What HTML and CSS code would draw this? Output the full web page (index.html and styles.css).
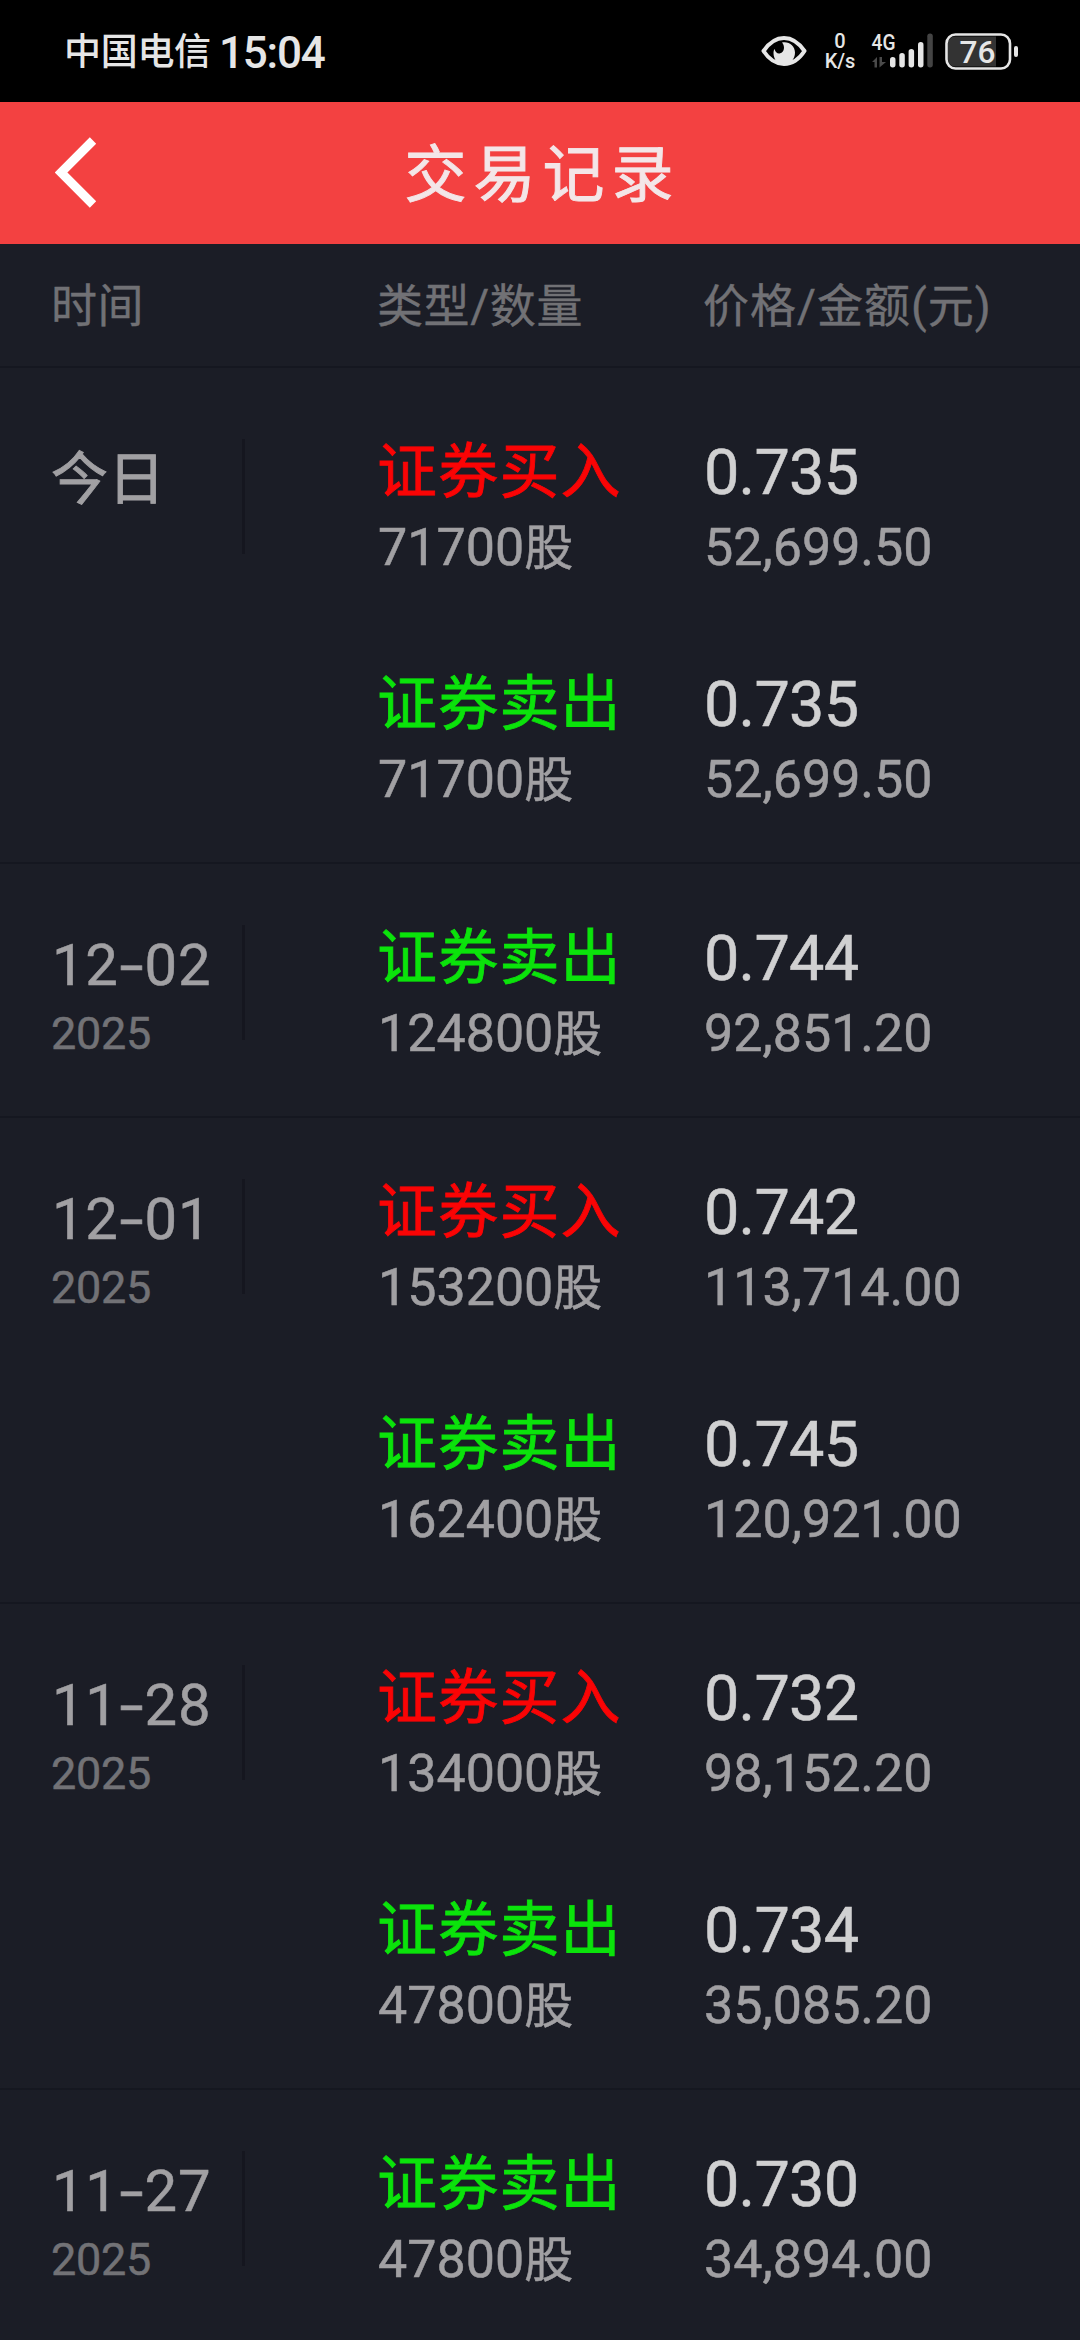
FILE: index.html
```html
<!DOCTYPE html>
<html lang="zh-CN">
<head>
<meta charset="utf-8">
<title>交易记录</title>
<link rel="stylesheet" href="styles.css">
</head>
<body>
<div class="status">
  <span class="carrier">中国电信</span>
  <span class="clock">15:04</span>
  <svg class="eye" width="46" height="32" viewBox="0 0 46 32">
    <path d="M2.500 16C8 8 15 3 23 3s15 5 20.500 13C38 24.500 31 29 23 29S8 24.500 2.500 16Z" fill="none" stroke="#e6e6e6" stroke-width="4" stroke-linejoin="round"/>
    <path d="M21 7.500c7-1.500 13 3.500 13 10S29 30 23 30 12.500 24.500 12.500 18c0-1.500.3-3 1.200-4 .5 3.500 3 5 5.500 4.300 4-1.100 5.300-6.800 1.800-10.800Z" fill="#e6e6e6"/>
  </svg>
  <div class="speed"><span>0</span><span>K/s</span></div>
  <svg class="signal" width="63" height="40" viewBox="0 -4 63 40">
    <text class="net" x="0.500" y="17" textLength="24" lengthAdjust="spacingAndGlyphs">4G</text>
    <path d="M1 29l5-5v10.500h-2.500v-5.500ZM8.500 24H11v5h4l-6.500 5.500Z" fill="#4a4a4a"/>
    <rect x="19" y="24" width="5.500" height="10.500" rx="2.700" fill="#e6e6e6"/>
    <rect x="28.300" y="20" width="5.500" height="14.500" rx="2.700" fill="#e6e6e6"/>
    <rect x="37.600" y="16" width="5.500" height="18.500" rx="2.700" fill="#e6e6e6"/>
    <rect x="47" y="9" width="5.500" height="25.500" rx="2.700" fill="#e6e6e6"/>
    <rect x="56.300" y="0.500" width="5.500" height="34" rx="2.700" fill="#444"/>
  </svg>
  <svg class="battery" width="73" height="37" viewBox="0 0 73 37">
    <path d="M10 3.500H51V33.500H10a7 7 0 0 1-7-7V10.500a7 7 0 0 1 7-7Z" fill="#333"/>
    <rect x="1.500" y="1.500" width="63.500" height="34" rx="9" fill="none" stroke="#e6e6e6" stroke-width="2.600"/>
    <rect x="69" y="13" width="4" height="11" rx="2" fill="#e6e6e6"/>
    <text class="level" x="14.500" y="30" textLength="36" lengthAdjust="spacingAndGlyphs">76</text>
  </svg>
</div>

<header class="bar">
  <svg class="back" width="44" height="72" viewBox="0 0 44 72"><path d="M38 3.500L6 35.500L38 67.500" fill="none" stroke="#fff" stroke-width="9"/></svg>
  <h1 class="title">交易记录</h1>
</header>

<div class="heads row">
  <span>时间</span><span>类型/数量</span><span class="wide">价格/金额(元)</span>
</div>

<main>
  <section class="group first row">
    <div class="date"><div class="today">今日</div></div>
    <div class="trades">
      <div class="trade"><b class="kind buy">证券买入</b><b class="price">0.735</b><span class="sum">71700<i>股</i></span><span class="sum">52,699.50</span></div>
      <div class="trade"><b class="kind sell">证券卖出</b><b class="price">0.735</b><span class="sum">71700<i>股</i></span><span class="sum">52,699.50</span></div>
    </div>
  </section>
  <section class="group row">
    <div class="date"><div class="day">12<span class="dash">-</span>02</div><div class="year">2025</div></div>
    <div class="trades">
      <div class="trade"><b class="kind sell">证券卖出</b><b class="price">0.744</b><span class="sum">124800<i>股</i></span><span class="sum">92,851.20</span></div>
    </div>
  </section>
  <section class="group row">
    <div class="date"><div class="day">12<span class="dash">-</span>01</div><div class="year">2025</div></div>
    <div class="trades">
      <div class="trade"><b class="kind buy">证券买入</b><b class="price">0.742</b><span class="sum">153200<i>股</i></span><span class="sum">113,714.00</span></div>
      <div class="trade"><b class="kind sell">证券卖出</b><b class="price">0.745</b><span class="sum">162400<i>股</i></span><span class="sum">120,921.00</span></div>
    </div>
  </section>
  <section class="group row">
    <div class="date"><div class="day">11<span class="dash">-</span>28</div><div class="year">2025</div></div>
    <div class="trades">
      <div class="trade"><b class="kind buy">证券买入</b><b class="price">0.732</b><span class="sum">134000<i>股</i></span><span class="sum">98,152.20</span></div>
      <div class="trade"><b class="kind sell">证券卖出</b><b class="price">0.734</b><span class="sum">47800<i>股</i></span><span class="sum">35,085.20</span></div>
    </div>
  </section>
  <section class="group row">
    <div class="date"><div class="day">11<span class="dash">-</span>27</div><div class="year">2025</div></div>
    <div class="trades">
      <div class="trade"><b class="kind sell">证券卖出</b><b class="price">0.730</b><span class="sum">47800<i>股</i></span><span class="sum">34,894.00</span></div>
    </div>
  </section>
</main>
</body>
</html>
```
FILE: styles.css
```css
* { box-sizing: border-box; }
body {
  margin: 0;
  width: 1080px;
  height: 2340px;
  overflow: hidden;
  background: #1b1d26;
  color: #a1a0a3;
  font-family: Roboto, "Noto Sans CJK SC", sans-serif;
}
b, i { font-weight: 400; font-style: normal; }

.status {
  display: flex;
  align-items: center;
  height: 102px;
  padding-left: 64px;
  background: #000;
  color: #e6e6e6;
}
.carrier { width: 155px; padding-top: 4px; font-size: 37px; line-height: 60px; font-weight: 500; letter-spacing: -.3px; white-space: nowrap; }
.clock { width: 542px; padding-top: 3px; font-size: 44px; line-height: 60px; font-weight: 500; letter-spacing: -1.2px; }
.speed {
  display: flex;
  flex-direction: column;
  align-items: center;
  gap: 2px;
  width: 32px;
  margin-left: 17px;
  font-size: 20px;
  line-height: 18px;
  font-weight: 500;
}
.signal { margin: -4px 0 0 15px; }
.battery { margin-left: 11px; }
.net { font: 500 22px Roboto, sans-serif; fill: #e6e6e6; }
.level { font: 500 32px Roboto, sans-serif; fill: #e6e6e6; }

.bar {
  display: grid;
  grid-template-columns: 100px 1fr 100px;
  align-items: center;
  height: 142px;
  background: #f34141;
}
.back { margin-left: 55px; }
.title {
  margin: 0;
  padding-top: 5px;
  font-size: 62px;
  line-height: 90px;
  font-weight: 400;
  -webkit-text-stroke: .9px;
  letter-spacing: 7px;
  text-indent: 5px;
  text-align: center;
  color: #f3e6e8;
}

.row { display: grid; border-bottom: 2px solid #151720; }
.heads {
  grid-template-columns: 326px 326px 1fr;
  align-items: center;
  height: 124px;
  padding: 0 0 7px 51px;
  font-size: 46px;
  letter-spacing: .6px;
  color: #717175;
  -webkit-text-stroke: .4px;
}
.wide { letter-spacing: 1px; }
.group { grid-template-columns: 245px 1fr; padding: 61px 0 74px; -webkit-text-stroke: .5px; }
.first { padding-top: 71px; }
.date {
  height: 115px;
  padding-left: 52px;
  border-right: 3px solid #15161f;
}
.today { margin-left: -1px; font-size: 57px; line-height: 82px; -webkit-text-stroke: .9px; }
.day { font-size: 58px; line-height: 81px; letter-spacing: .7px; }
.dash { display: inline-block; width: 26px; text-align: center; transform: scaleX(1.5); }
.year { margin-left: -1px; font-size: 45px; line-height: 56px; letter-spacing: -.3px; color: #727276; }

.trades { display: grid; gap: 115px; padding-left: 133px; }
.trade {
  display: grid;
  grid-template-columns: 326px 1fr;
  grid-template-rows: 67px 50px;
  height: 117px;
  white-space: nowrap;
}
.kind { margin-left: -1px; font-size: 60px; line-height: 67px; letter-spacing: 1.2px; -webkit-text-stroke: .8px; }
.buy { color: #fa0405; }
.sell { color: #0be30b; }
.price { font-size: 63px; line-height: 67px; letter-spacing: -.8px; color: #d0d0d1; }
.sum { font-size: 52px; line-height: 84px; letter-spacing: 0; }
.sum i { font-size: 49px; }
```
